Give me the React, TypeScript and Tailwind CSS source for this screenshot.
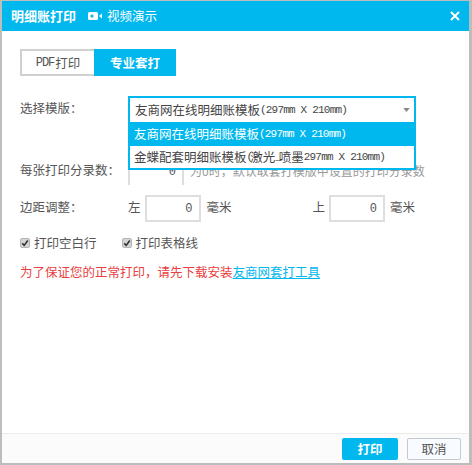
const cjk = "font-['Noto_Sans_CJK_SC','Liberation_Sans',sans-serif]";

function Spec({ children, tight }: { children: React.ReactNode; tight?: boolean }) {
  return (
    <span className={tight ? "font-['Liberation_Mono',monospace] text-[11px] tracking-[-3px]" : "font-['Liberation_Mono',monospace] text-[11px] tracking-[-0.8px]"}>
      {children}
    </span>
  );
}

function NumBox() {
  return (
    <div className="h-[27px] w-[56px] border-2 border-[#dedede] flex items-center justify-end pr-[6px] text-[12px] text-[#555555] font-['Liberation_Mono',monospace]">
      0
    </div>
  );
}

function Check({ label }: { label: string }) {
  return (
    <div className="flex items-center gap-[4px]">
      <div className="w-[10px] h-[10px] rounded-[2px] bg-[#d4d4d4] border border-[#b4b4b4] flex items-center justify-center">
        <svg viewBox="0 0 10 10" className="w-[8px] h-[8px]">
          <path d="M1.5 5.5 L4 8 L8.5 2" stroke="#333333" strokeWidth="2" fill="none" />
        </svg>
      </div>
      <span>{label}</span>
    </div>
  );
}

export default function App() {
  return (
    <div className={`w-[472px] h-[465px] bg-[#bdbdbd] pl-[2px] pr-[3px] pt-[1px] pb-[2px] ${cjk} text-[12.5px] leading-[20px] text-[#555555]`}>
      <div className="h-full bg-white flex flex-col">
        <div className="h-[30px] bg-[#00b7ee] flex items-center text-white pl-[9px] pr-[9px] shrink-0">
          <span className="font-bold text-[13px]">明细账打印</span>
          <svg viewBox="0 0 14 8" className="w-[14px] h-[8px] ml-[12px]">
            <rect x="0" y="0" width="10" height="8" rx="1.5" fill="#ffffff" />
            <circle cx="4" cy="4" r="1.6" fill="#00b7ee" />
            <path d="M11 4 L14 1.5 V6.5 Z" fill="#ffffff" />
          </svg>
          <span className="ml-[5px]">视频演示</span>
          <svg viewBox="0 0 10 10" className="w-[10px] h-[10px] ml-auto">
            <path d="M1 1 L9 9 M9 1 L1 9" stroke="#ffffff" strokeWidth="2" fill="none" />
          </svg>
        </div>

        <div className="flex-1 pl-[18px] pt-[18px] flex flex-col">
          <div className="flex h-[27px]">
            <div className="w-[74px] border-2 border-r-0 border-[#d0d0d0] flex items-center justify-center">
              <span className="font-['Liberation_Mono',monospace] text-[12px] tracking-[-1px]">PDF</span>
              <span className="ml-[1px]">打印</span>
            </div>
            <div className="w-[82px] bg-[#00b7ee] text-white font-bold flex items-center justify-center">专业套打</div>
          </div>

          <div className="flex mt-[20px] relative h-[72px]">
            <div className="w-[108px] leading-[24px]">选择模版：</div>
            <div className="absolute left-[108px] top-0 w-[288px] border-2 border-[#00b7ee] bg-white z-10 text-[#444444]">
              <div className="h-[24px] flex items-center pl-[5px] relative">
                友商网在线明细账模板<Spec>(297mm X 210mm)</Spec>
                <svg viewBox="0 0 8 5" className="absolute right-[4px] top-[10px] w-[7px] h-[4px]">
                  <path d="M0 0 H8 L4 5 Z" fill="#888888" />
                </svg>
              </div>
              <div className="h-[24px] flex items-center pl-[4px] bg-[#00b7ee] text-white">
                友商网在线明细账模板<Spec>(297mm X 210mm)</Spec>
              </div>
              <div className="h-[22px] flex items-center pl-[4px]">
                金蝶配套明细账模板<Spec tight>(</Spec>激光<Spec tight>_</Spec>喷墨<Spec>297mm X 210mm)</Spec>
              </div>
            </div>
          </div>

          <div className="flex h-[25px] mt-[-8px] items-start">
            <div className="w-[108px]">每张打印分录数：</div>
            <div className="w-[56px] h-[25px] border-x-2 border-[#dedede] flex items-start justify-end pr-[6px] pt-[2px] text-[12px]">
              <span className="font-['Liberation_Mono',monospace]">0</span>
            </div>
            <div className="ml-[6px] mt-[1px] text-[12px] text-[#999999] whitespace-nowrap">为0时，默认取套打模版中设置的打印分录数</div>
          </div>

          <div className="flex items-start h-[27px] mt-[10px]">
            <div className="w-[108px] mt-[2px]">边距调整：</div>
            <span className="mt-[2px]">左</span>
            <div className="ml-[4px]"><NumBox /></div>
            <span className="ml-[6px] mt-[2px]">毫米</span>
            <span className="ml-[81px] mt-[2px]">上</span>
            <div className="ml-[4px]"><NumBox /></div>
            <span className="ml-[5px] mt-[2px]">毫米</span>
          </div>

          <div className="flex items-center gap-[25px] mt-[11px] h-[20px]">
            <Check label="打印空白行" />
            <Check label="打印表格线" />
          </div>

          <div className="mt-[9px] text-[#e84040] whitespace-nowrap">
            为了保证您的正常打印，请先下载安装<span className="text-[#00b7ee] underline">友商网套打工具</span>
          </div>
        </div>

        <div className="h-[30px] border-t border-[#ececec] bg-[#fbfbfb] flex items-center justify-end pr-[8px] gap-[9px] shrink-0">
          <div className="w-[56px] h-[22px] bg-[#00b7ee] rounded-[2px] text-white font-bold flex items-center justify-center">打印</div>
          <div className="w-[54px] h-[22px] bg-[#f8fbff] border border-[#c4c9d0] rounded-[2px] flex items-center justify-center">取消</div>
        </div>
      </div>
    </div>
  );
}
